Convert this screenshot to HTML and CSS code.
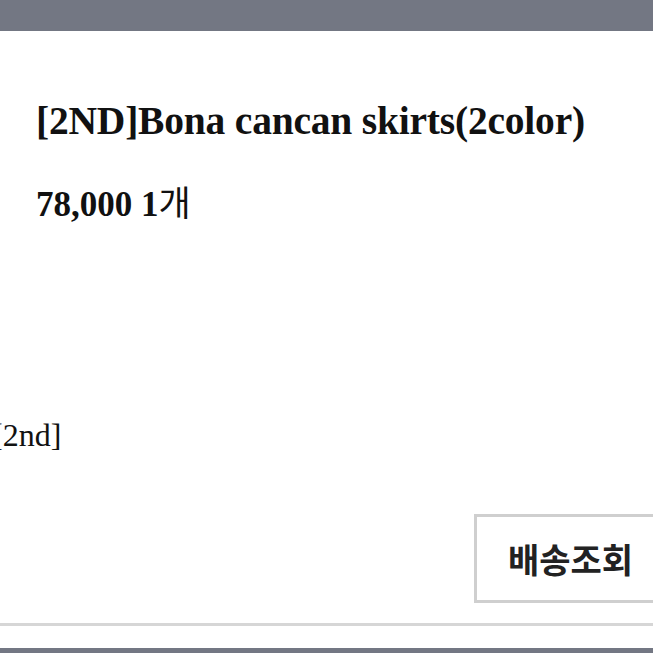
FILE: index.html
```html
<!DOCTYPE html>
<html lang="ko">
<head>
  <meta charset="UTF-8">
  <meta name="viewport" content="width=device-width, initial-scale=1">
  <title>주문 상세</title>
  <link rel="stylesheet" href="styles.css">
</head>
<body>
  <div class="top-bar"></div>

  <main class="order">
    <section class="product">
      <h2 class="product-name">[2ND]Bona cancan skirts(2color)</h2>
      <p class="product-price">78,000 1<span class="unit">개</span></p>
    </section>

    <p class="option">[2nd]</p>

    <div class="actions">
      <button class="track-btn">배송조회</button>
    </div>
  </main>

  <div class="divider"></div>
  <div class="bottom-bar"></div>
</body>
</html>
```

FILE: styles.css
```css
* { margin: 0; padding: 0; box-sizing: border-box; }

body {
  width: 653px;
  height: 653px;
  overflow: hidden;
  background-color: #fff;
  color: #111;
  font-family: "Liberation Serif", "Noto Sans CJK KR", serif;
}

.top-bar {
  height: 31px;
  background-color: #737783;
}

.order {
  height: 592px;
  display: flex;
  flex-direction: column;
}

.product {
  padding: 66px 0 0 36px;
}

.product-name {
  font-size: 39.5px;
  font-weight: bold;
  line-height: 48px;
  letter-spacing: -0.2px;
}

.product-price {
  margin-top: 40px;
  font-size: 35px;
  font-weight: bold;
  line-height: 40px;
}

.product-price .unit {
  font-weight: normal;
}

.option {
  margin: 190px 0 0 -8px;
  font-size: 32px;
  line-height: 40px;
}

.actions {
  margin-top: 59px;
  display: flex;
  justify-content: flex-end;
}

.track-btn {
  width: 190px;
  height: 89px;
  margin-right: -11px;
  padding-right: 0;
  background-color: #fff;
  border: 3px solid #cfcfcf;
  border-right: none;
  font-family: "Noto Sans CJK KR", sans-serif;
  font-size: 34px;
  font-weight: bold;
  color: #222;
}

.divider {
  height: 3px;
  background-color: #d6d6d6;
}

.bottom-bar {
  margin-top: 22px;
  height: 10px;
  background-color: #737783;
}
```
